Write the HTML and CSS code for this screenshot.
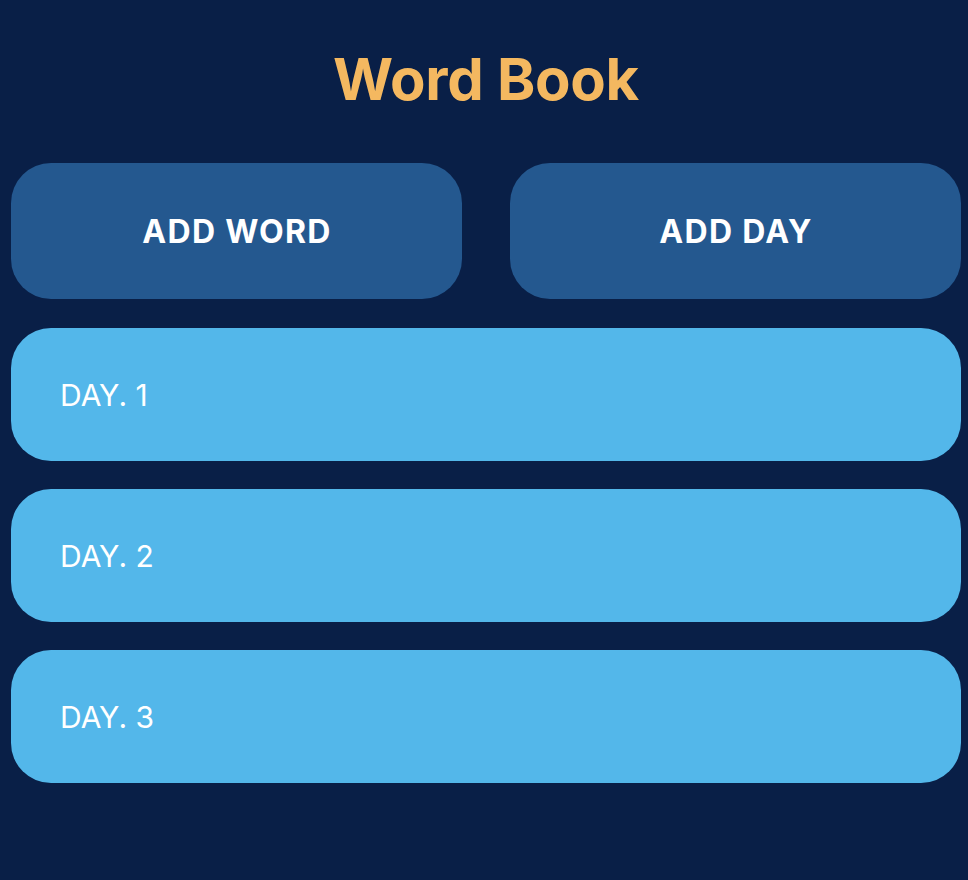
FILE: index.html
```html
<!DOCTYPE html>
<html>
<head>
<meta charset="utf-8">
<link rel="stylesheet" href="styles.css">
</head>
<body>
<div class="app">
  <h1 class="title">Word Book</h1>
  <div class="actions">
    <button class="action">ADD WORD</button>
    <button class="action">ADD DAY</button>
  </div>
  <ul class="days">
    <li class="day">DAY. 1</li>
    <li class="day">DAY. 2</li>
    <li class="day">DAY. 3</li>
  </ul>
</div>
</body>
</html>
```
FILE: styles.css
```css
html, body {
  margin: 0;
  padding: 0;
  background: #091f47;
  height: 100%;
}
body {
  font-family: Inter, "Noto Sans", sans-serif;
}
.app {
  width: 950px;
  margin-left: 11px;
  padding-top: 44px;
}
.title {
  margin: 0;
  font-size: 58px;
  line-height: 70px;
  font-weight: 700;
  color: #f4b860;
  text-align: center;
  letter-spacing: -0.3px;
}
.actions {
  display: flex;
  gap: 48px;
  margin-top: 49px;
}
.action {
  flex: 1;
  height: 136px;
  border: none;
  border-radius: 40px;
  background: #24588f;
  color: #ffffff;
  font-family: Inter, "Noto Sans", sans-serif;
  font-size: 32px;
  font-weight: 700;
  letter-spacing: 1.3px;
  padding: 0 0 0 1px;
}
.days {
  list-style: none;
  margin: 29px 0 0;
  padding: 0;
  display: flex;
  flex-direction: column;
  gap: 28px;
}
.day {
  height: 133px;
  border-radius: 40px;
  background: #53b7ea;
  color: #ffffff;
  font-size: 30px;
  display: flex;
  align-items: center;
  padding-left: 49px;
}
```
